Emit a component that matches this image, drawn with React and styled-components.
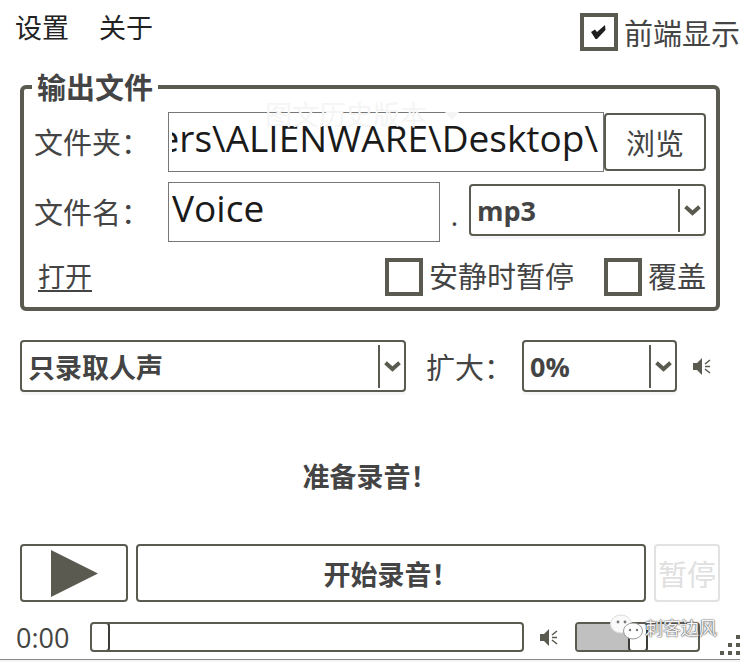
import React from "react";
import styled, { createGlobalStyle } from "styled-components";

const INK = "#5a5a50";
const TEXT = "#444";
const FONT = '"Open Sans", "Noto Sans CJK SC", sans-serif';

const GlobalStyle = createGlobalStyle`
  html, body {
    margin: 0;
    padding: 0;
    background: #fff;
  }
`;

const Page = styled.div`
  position: relative;
  width: 740px;
  height: 662px;
  overflow: hidden;
  box-sizing: border-box;
  padding: 0 20px;
  background: #fff;
  color: ${TEXT};
  font-family: ${FONT};
  font-size: 29px;
`;

const TopBar = styled.div`
  display: flex;
  justify-content: space-between;
  height: 85px;
  margin: 0 -20px 0 -5px;
`;

const Menu = styled.div`
  display: flex;
  gap: 30px;
  height: 52px;
  align-items: center;
  font-size: 27px;
  color: #222;
`;

const StayOnTop = styled.label`
  display: flex;
  align-items: center;
  gap: 6px;
  height: 38px;
  margin-top: 13px;
  white-space: nowrap;
`;

const Box = styled.span`
  display: flex;
  flex: none;
  align-items: center;
  justify-content: center;
  box-sizing: border-box;
  width: 38px;
  height: 38px;
  border: 4px solid ${INK};
`;

const Group = styled.div`
  position: relative;
  box-sizing: border-box;
  width: 700px;
  height: 226px;
  padding: 23px 10px 0 10px;
  border: 4px solid ${INK};
  border-radius: 6px;
  display: flex;
  flex-direction: column;
`;

const GroupTitle = styled.div`
  position: absolute;
  top: -22px;
  left: 8px;
  padding: 0 5px;
  background: #fff;
  font-weight: 700;
  line-height: 42px;
`;

const Row = styled.div`
  display: flex;
  align-items: flex-start;
  height: ${(p) => p.$h}px;
  margin-bottom: ${(p) => p.$gap}px;
`;

const FieldLabel = styled.div`
  flex: none;
  width: 134px;
  line-height: 62px;
  white-space: nowrap;
`;

const Field = styled.div`
  flex: none;
  display: flex;
  box-sizing: border-box;
  width: ${(p) => p.$w}px;
  height: 60px;
  padding: 0 5px 0 3px;
  border: 1px solid #777;
  font-size: 37px;
  line-height: 49px;
  color: #1a1a1a;
`;

const FieldText = styled.div`
  flex: 1;
  display: flex;
  justify-content: ${(p) => (p.$end ? "flex-end" : "flex-start")};
  overflow: hidden;
  white-space: nowrap;
`;

const Button = styled.div`
  display: flex;
  flex: none;
  align-items: center;
  justify-content: center;
  box-sizing: border-box;
  width: ${(p) => p.$w}px;
  height: ${(p) => p.$h}px;
  border: 2px solid ${(p) => (p.$off ? "#e2e2e2" : INK)};
  border-radius: 4px;
  color: ${(p) => (p.$off ? "#e0e0e0" : TEXT)};
  font-weight: ${(p) => (p.$bold ? 700 : 400)};
  font-size: ${(p) => (p.$bold ? 27 : 29)}px;
`;

const Browse = styled(Button)`
  margin-top: 1px;
`;

const Dot = styled.div`
  flex: none;
  width: 29px;
  text-align: center;
  line-height: 66px;
  font-size: 30px;
`;

const SelectBox = styled.div`
  flex: none;
  display: flex;
  align-items: center;
  box-sizing: border-box;
  width: ${(p) => p.$w}px;
  height: 52px;
  margin-top: ${(p) => p.$top || 0}px;
  padding-left: 6px;
  border: 2px solid ${INK};
  border-radius: 4px;
  box-shadow: 0 3px 0 #f6f6f6;
  font-weight: 700;
  font-size: 27px;
`;

const SelectValue = styled.div`
  flex: 1;
  white-space: nowrap;
`;

const Arrow = styled.div`
  flex: none;
  display: flex;
  align-items: center;
  justify-content: center;
  box-sizing: border-box;
  width: 26px;
  height: 43px;
  border-left: 2px solid ${INK};
`;

const OpenLink = styled.div`
  flex: none;
  margin-left: 4px;
  font-size: 27px;
  line-height: 38px;
  white-space: nowrap;
  text-decoration: underline;
  text-underline-offset: 3px;
`;

const Option = styled.div`
  display: flex;
  flex: none;
  align-items: center;
  gap: 6px;
  margin-left: ${(p) => p.$left}px;
  line-height: 38px;
  white-space: nowrap;
`;

const VoiceRow = styled.div`
  display: flex;
  align-items: center;
  margin-top: 29px;
  height: 52px;
`;

const Gain = styled.div`
  flex: none;
  width: 96px;
  margin-left: 20px;
`;

const Status = styled.div`
  height: 152px;
  display: flex;
  align-items: center;
  justify-content: center;
  padding-top: 15px;
  box-sizing: border-box;
  font-size: 27px;
  font-weight: 700;
`;

const Controls = styled.div`
  display: flex;
  gap: 8px;
  height: 58px;
`;

const Timeline = styled.div`
  display: flex;
  align-items: center;
  height: 30px;
  margin: 20px 0 0 -4px;
`;

const Time = styled.div`
  flex: none;
  width: 74px;
  font-size: 27px;
  color: #444;
`;

const Track = styled.div`
  flex: none;
  position: relative;
  box-sizing: border-box;
  width: ${(p) => p.$w}px;
  height: 30px;
  border: 2px solid ${INK};
  border-radius: 4px;
  overflow: hidden;
`;

const Fill = styled.div`
  height: 100%;
  background: #c0c0c0;
`;

const Thumb = styled.div`
  position: absolute;
  top: -2px;
  left: ${(p) => p.$at}px;
  box-sizing: border-box;
  width: 20px;
  height: 30px;
  border: 2px solid #3c3c38;
  border-radius: 4px;
  background: #fff;
`;

const IconSlot = styled.div`
  flex: none;
  display: flex;
  align-items: center;
  margin-left: ${(p) => p.$left}px;
  width: ${(p) => p.$w}px;
`;

const BottomLine = styled.div`
  position: absolute;
  left: 0;
  right: 0;
  top: 659px;
  height: 3px;
  border-top: 1px solid #888;
  background: #f5f5f5;
  box-sizing: border-box;
`;

const Grip = styled.svg`
  position: absolute;
  left: 720px;
  top: 635px;
`;

const GhostTab = styled.div`
  position: absolute;
  left: 265px;
  top: 97px;
  display: flex;
  align-items: center;
  gap: 18px;
  font-size: 27px;
  line-height: 36px;
  color: #f5f5f5;
  pointer-events: none;
`;

const GhostCaret = styled.span`
  width: 0;
  height: 0;
  border: 7px solid transparent;
  border-top: 8px solid #f5f5f5;
  margin-top: 8px;
`;

const Watermark = styled.div`
  position: absolute;
  left: 610px;
  top: 614px;
  display: flex;
  align-items: center;
  gap: 1px;
  font-size: 18px;
  color: #f4f4f4;
  text-shadow: 0 0 2px #444, 0 0 1px #444;
  white-space: nowrap;
`;

const Check = () => (
  <svg width="15" height="15" viewBox="0 0 15 15">
    <path d="M0 7 L4 4.5 L6 7 L14 0 L14.5 5 L6 14 L4.5 14 Z" fill="#1e1e1e" />
  </svg>
);

const Chevron = () => (
  <svg width="17" height="11" viewBox="0 0 17 11">
    <path d="M1.5 1.8 L8.5 8 L15.5 1.8" fill="none" stroke={INK} strokeWidth="4" />
  </svg>
);

const Speaker = () => (
  <svg width="18" height="19" viewBox="0 0 18 19">
    <path d="M0 6 H4 L9 1 V18 L4 13 H0 Z" fill={INK} />
    <path d="M17 3 L12 7 M12 9.5 H17 M12 12 L17 16" fill="none" stroke={INK} strokeWidth="1.6" />
  </svg>
);

const Play = () => (
  <svg width="47" height="47" viewBox="0 0 47 47">
    <path d="M0 0 L47 23.5 L0 47 Z" fill={INK} />
  </svg>
);

const WeChat = () => (
  <svg width="34" height="26" viewBox="0 0 34 26">
    <ellipse cx="11" cy="10" rx="10.5" ry="9" fill="#fafafa" stroke="#ddd" />
    <ellipse cx="23" cy="17" rx="9.5" ry="8" fill="#fff" stroke="#999" />
    <circle cx="8" cy="8" r="1.4" fill="#777" />
    <circle cx="15" cy="8" r="1.4" fill="#777" />
    <circle cx="20" cy="16" r="1.2" fill="#777" />
    <circle cx="27" cy="16" r="1.2" fill="#777" />
  </svg>
);

const Select = ({ w, top, children }) => (
  <SelectBox $w={w} $top={top}>
    <SelectValue>{children}</SelectValue>
    <Arrow>
      <Chevron />
    </Arrow>
  </SelectBox>
);

export default function App() {
  return (
    <Page>
      <GlobalStyle />
      <TopBar>
        <Menu>
          <span>设置</span>
          <span>关于</span>
        </Menu>
        <StayOnTop>
          <Box>
            <Check />
          </Box>
          前端显示
        </StayOnTop>
      </TopBar>

      <Group>
        <GroupTitle>输出文件</GroupTitle>
        <Row $h={60} $gap={10}>
          <FieldLabel>文件夹：</FieldLabel>
          <Field $w={436}>
            <FieldText $end>C:\Users\ALIENWARE\Desktop\</FieldText>
          </Field>
          <Browse $w={102} $h={58}>浏览</Browse>
        </Row>
        <Row $h={60} $gap={16}>
          <FieldLabel>文件名：</FieldLabel>
          <Field $w={272}>
            <FieldText>Voice</FieldText>
          </Field>
          <Dot>.</Dot>
          <Select w={237} top={2}>mp3</Select>
        </Row>
        <Row $h={38} $gap={0}>
          <OpenLink>打开</OpenLink>
          <Option $left={293}>
            <Box />
            安静时暂停
          </Option>
          <Option $left={30}>
            <Box />
            覆盖
          </Option>
        </Row>
      </Group>

      <VoiceRow>
        <Select w={386}>只录取人声</Select>
        <Gain>扩大：</Gain>
        <Select w={155}>0%</Select>
        <IconSlot $left={16} $w={20}>
          <Speaker />
        </IconSlot>
      </VoiceRow>

      <Status>准备录音！</Status>

      <Controls>
        <Button $w={108} $h={58}>
          <Play />
        </Button>
        <Button $w={510} $h={58} $bold>开始录音！</Button>
        <Button $w={66} $h={58} $off>暂停</Button>
      </Controls>

      <Timeline>
        <Time>0:00</Time>
        <Track $w={434}>
          <Thumb $at={-2} />
        </Track>
        <IconSlot $left={16} $w={35}>
          <Speaker />
        </IconSlot>
        <Track $w={125}>
          <Fill style={{ width: `${(53 / 125) * 100}%` }} />
          <Thumb $at={51} />
        </Track>
      </Timeline>

      <GhostTab>
        图文历史版本
        <GhostCaret />
      </GhostTab>
      <BottomLine />
      <Grip width="20" height="20" viewBox="0 0 20 20">
        <path d="M16 0h4v4h-4z M8 8h4v4H8z M16 8h4v4h-4z M0 16h4v4H0z M8 16h4v4H8z M16 16h4v4h-4z" fill={INK} />
      </Grip>
      <Watermark>
        <WeChat />
        刺客边风
      </Watermark>
    </Page>
  );
}
